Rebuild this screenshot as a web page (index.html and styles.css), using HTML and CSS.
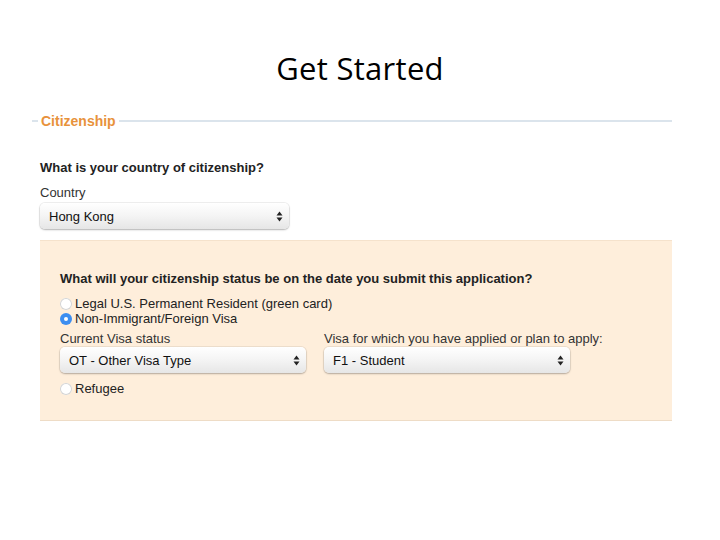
FILE: index.html
```html
<!DOCTYPE html>
<html>
<head>
<meta charset="utf-8">
<link rel="stylesheet" href="styles.css">
</head>
<body>
<h1 class="title">Get Started</h1>
<div class="legend">
  <span class="legend-line short"></span>
  <span class="legend-text">Citizenship</span>
  <span class="legend-line long"></span>
</div>
<div class="section">
  <div class="question">What is your country of citizenship?</div>
  <div class="label">Country</div>
  <div class="select country">
    <span>Hong Kong</span>
    <svg class="arrows" width="7" height="11" viewBox="0 0 7 11"><path d="M3.5 0.5 L6.5 4.5 L0.5 4.5 Z M3.5 10.5 L6.5 6.5 L0.5 6.5 Z" fill="#222"/></svg>
  </div>
</div>
<div class="panel">
  <div class="question">What will your citizenship status be on the date you submit this application?</div>
  <div class="radios">
    <div class="radio-row"><span class="radio"></span><span>Legal U.S. Permanent Resident (green card)</span></div>
    <div class="radio-row"><span class="radio checked"></span><span>Non-Immigrant/Foreign Visa</span></div>
  </div>
  <div class="visa-grid">
    <div class="visa-col">
      <div class="label">Current Visa status</div>
      <div class="select visa">
        <span>OT - Other Visa Type</span>
        <svg class="arrows" width="7" height="11" viewBox="0 0 7 11"><path d="M3.5 0.5 L6.5 4.5 L0.5 4.5 Z M3.5 10.5 L6.5 6.5 L0.5 6.5 Z" fill="#222"/></svg>
      </div>
    </div>
    <div class="visa-col">
      <div class="label">Visa for which you have applied or plan to apply:</div>
      <div class="select visa">
        <span>F1 - Student</span>
        <svg class="arrows" width="7" height="11" viewBox="0 0 7 11"><path d="M3.5 0.5 L6.5 4.5 L0.5 4.5 Z M3.5 10.5 L6.5 6.5 L0.5 6.5 Z" fill="#222"/></svg>
      </div>
    </div>
  </div>
  <div class="radio-row refugee"><span class="radio"></span><span>Refugee</span></div>
</div>
</body>
</html>
```
FILE: styles.css
```css
html, body {
  margin: 0;
  padding: 0;
  background: #ffffff;
}
body {
  width: 720px;
  height: 540px;
  font-family: "Liberation Sans", Arial, sans-serif;
  font-size: 13px;
  color: #222;
  overflow: hidden;
}
.title {
  margin: 0;
  padding-top: 48px;
  height: 52px;
  text-align: center;
  font-family: "Open Sans", "Liberation Sans", sans-serif;
  font-weight: 400;
  font-size: 31px;
  line-height: 40px;
  color: #000;
  letter-spacing: 0.3px;
}
.legend {
  display: flex;
  align-items: center;
  margin: 10px 48px 0 32px;
  height: 22px;
}
.legend-line {
  height: 2px;
  background: #dbe4ec;
}
.legend-line.short {
  width: 6px;
}
.legend-line.long {
  flex: 1;
}
.legend-text {
  color: #e8923c;
  font-weight: bold;
  font-size: 14px;
  padding: 0 3px;
}
.section {
  padding: 28px 0 0 40px;
}
.question {
  font-weight: bold;
  font-size: 13px;
  line-height: 16px;
  color: #222;
}
.label {
  line-height: 16px;
  color: #333;
  white-space: nowrap;
}
.section .label {
  margin-top: 9px;
}
.select {
  display: flex;
  align-items: center;
  justify-content: space-between;
  box-sizing: border-box;
  height: 26px;
  padding: 0 6px 0 9px;
  border-radius: 5px;
  background: linear-gradient(#ffffff, #f4f4f4 50%, #e6e6e6);
  box-shadow: 0 1px 2px rgba(0,0,0,0.25), 0 0 0 1px rgba(0,0,0,0.06);
  color: #111;
}
.country {
  width: 249px;
  margin-top: 2px;
}
.panel {
  margin: 11px 48px 0 40px;
  height: 181px;
  box-sizing: border-box;
  background: #feeedb;
  border-top: 1px solid #f5e2cc;
  border-bottom: 1px solid #eedcc6;
  padding: 30px 20px 0 20px;
}
.radios {
  margin-top: 9px;
}
.radio-row {
  display: flex;
  align-items: center;
  gap: 3px;
  height: 15px;
  line-height: 15px;
}
.radio {
  width: 12px;
  height: 12px;
  border-radius: 50%;
  background: #fff;
  box-shadow: inset 0 0 0 1px #d4d4d4;
  box-sizing: border-box;
}
.radio.checked {
  background: #3d8ef0;
  box-shadow: none;
  display: flex;
  align-items: center;
  justify-content: center;
}
.radio.checked::after {
  content: "";
  width: 4px;
  height: 4px;
  border-radius: 50%;
  background: #fff;
}
.visa-grid {
  display: grid;
  grid-template-columns: 246px 248px;
  column-gap: 18px;
  margin-top: 5px;
}
.visa-col .label {
  margin-bottom: 0;
}
.visa {
  width: 246px;
}
.refugee {
  margin-top: 8px;
}
```
